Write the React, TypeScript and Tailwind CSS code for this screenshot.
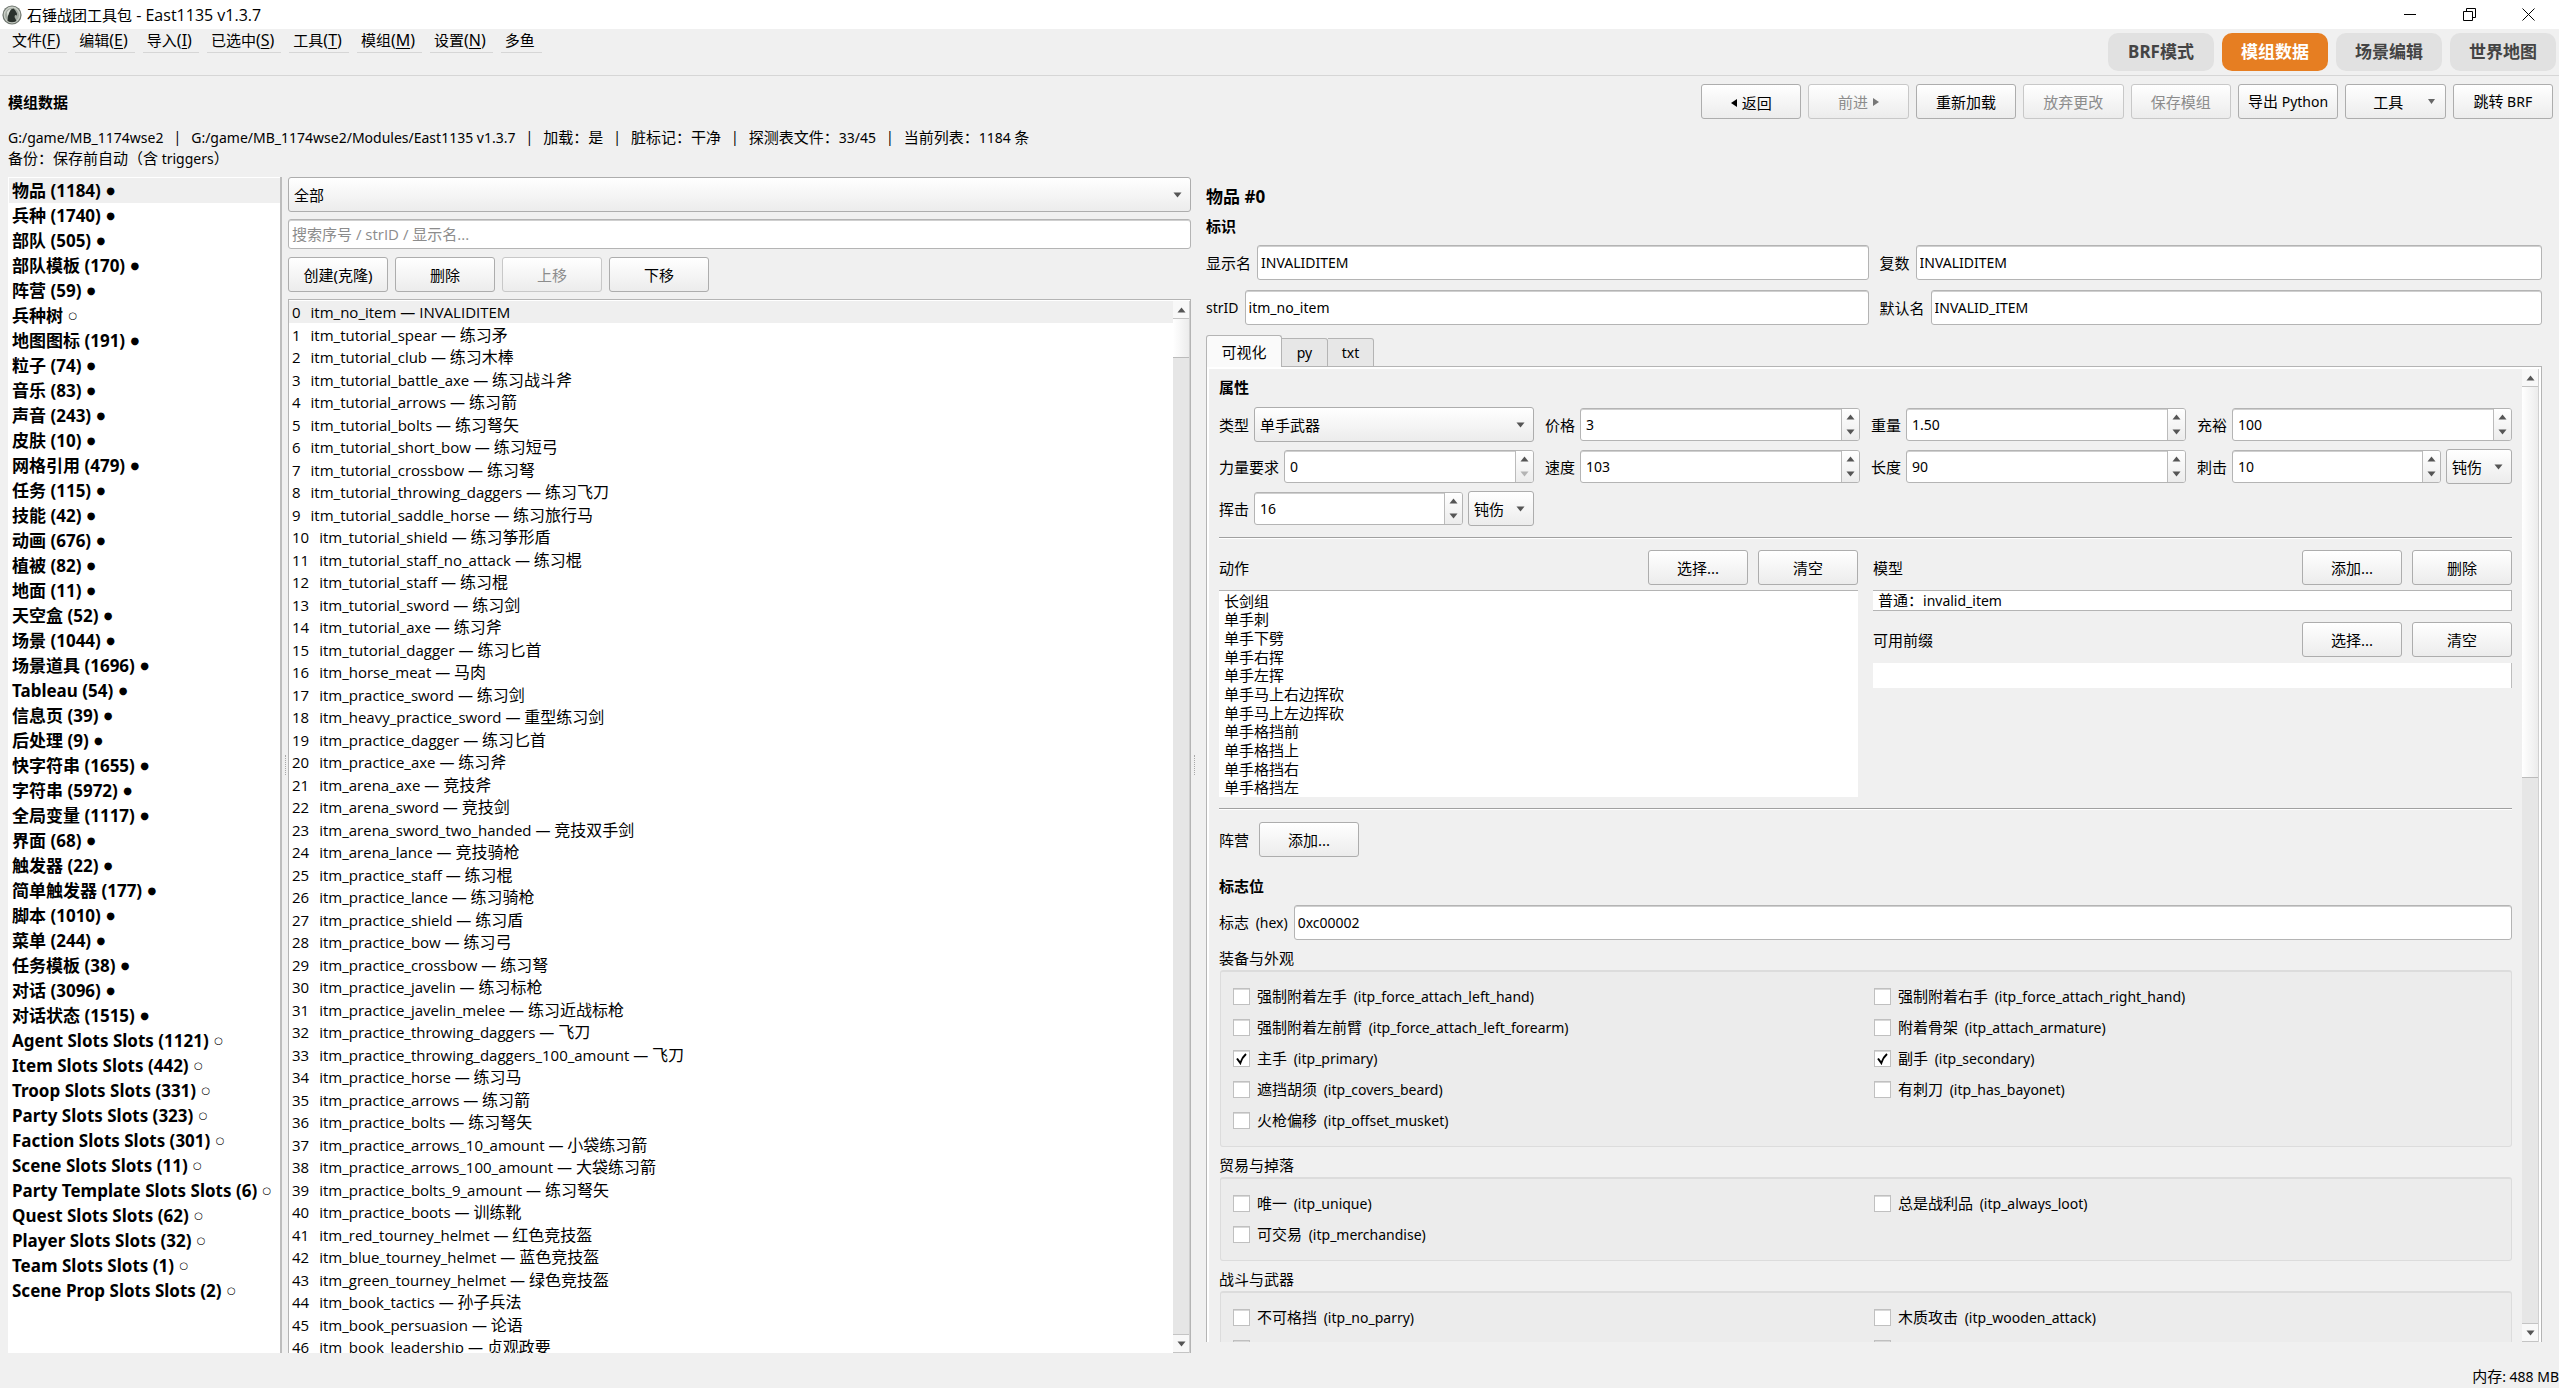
import { Fragment } from "react";

const MENUS = [
  ["文件", "F"],
  ["编辑", "E"],
  ["导入", "I"],
  ["已选中", "S"],
  ["工具", "T"],
  ["模组", "M"],
  ["设置", "N"],
  ["多鱼", ""],
];

const MODES = ["BRF模式", "模组数据", "场景编辑", "世界地图"];

const STATUS = [
  "G:/game/MB_1174wse2",
  "G:/game/MB_1174wse2/Modules/East1135 v1.3.7",
  "加载：是",
  "脏标记：干净",
  "探测表文件：33/45",
  "当前列表：1184 条",
];

// name, count, loaded
const CATEGORIES: [string, string, boolean][] = [
  ["物品", "1184", true],
  ["兵种", "1740", true],
  ["部队", "505", true],
  ["部队模板", "170", true],
  ["阵营", "59", true],
  ["兵种树", "", false],
  ["地图图标", "191", true],
  ["粒子", "74", true],
  ["音乐", "83", true],
  ["声音", "243", true],
  ["皮肤", "10", true],
  ["网格引用", "479", true],
  ["任务", "115", true],
  ["技能", "42", true],
  ["动画", "676", true],
  ["植被", "82", true],
  ["地面", "11", true],
  ["天空盒", "52", true],
  ["场景", "1044", true],
  ["场景道具", "1696", true],
  ["Tableau", "54", true],
  ["信息页", "39", true],
  ["后处理", "9", true],
  ["快字符串", "1655", true],
  ["字符串", "5972", true],
  ["全局变量", "1117", true],
  ["界面", "68", true],
  ["触发器", "22", true],
  ["简单触发器", "177", true],
  ["脚本", "1010", true],
  ["菜单", "244", true],
  ["任务模板", "38", true],
  ["对话", "3096", true],
  ["对话状态", "1515", true],
  ["Agent Slots Slots", "1121", false],
  ["Item Slots Slots", "442", false],
  ["Troop Slots Slots", "331", false],
  ["Party Slots Slots", "323", false],
  ["Faction Slots Slots", "301", false],
  ["Scene Slots Slots", "11", false],
  ["Party Template Slots Slots", "6", false],
  ["Quest Slots Slots", "62", false],
  ["Player Slots Slots", "32", false],
  ["Team Slots Slots", "1", false],
  ["Scene Prop Slots Slots", "2", false],
];

const ITEMS = [
  "itm_no_item — INVALIDITEM",
  "itm_tutorial_spear — 练习矛",
  "itm_tutorial_club — 练习木棒",
  "itm_tutorial_battle_axe — 练习战斗斧",
  "itm_tutorial_arrows — 练习箭",
  "itm_tutorial_bolts — 练习弩矢",
  "itm_tutorial_short_bow — 练习短弓",
  "itm_tutorial_crossbow — 练习弩",
  "itm_tutorial_throwing_daggers — 练习飞刀",
  "itm_tutorial_saddle_horse — 练习旅行马",
  "itm_tutorial_shield — 练习筝形盾",
  "itm_tutorial_staff_no_attack — 练习棍",
  "itm_tutorial_staff — 练习棍",
  "itm_tutorial_sword — 练习剑",
  "itm_tutorial_axe — 练习斧",
  "itm_tutorial_dagger — 练习匕首",
  "itm_horse_meat — 马肉",
  "itm_practice_sword — 练习剑",
  "itm_heavy_practice_sword — 重型练习剑",
  "itm_practice_dagger — 练习匕首",
  "itm_practice_axe — 练习斧",
  "itm_arena_axe — 竞技斧",
  "itm_arena_sword — 竞技剑",
  "itm_arena_sword_two_handed — 竞技双手剑",
  "itm_arena_lance — 竞技骑枪",
  "itm_practice_staff — 练习棍",
  "itm_practice_lance — 练习骑枪",
  "itm_practice_shield — 练习盾",
  "itm_practice_bow — 练习弓",
  "itm_practice_crossbow — 练习弩",
  "itm_practice_javelin — 练习标枪",
  "itm_practice_javelin_melee — 练习近战标枪",
  "itm_practice_throwing_daggers — 飞刀",
  "itm_practice_throwing_daggers_100_amount — 飞刀",
  "itm_practice_horse — 练习马",
  "itm_practice_arrows — 练习箭",
  "itm_practice_bolts — 练习弩矢",
  "itm_practice_arrows_10_amount — 小袋练习箭",
  "itm_practice_arrows_100_amount — 大袋练习箭",
  "itm_practice_bolts_9_amount — 练习弩矢",
  "itm_practice_boots — 训练靴",
  "itm_red_tourney_helmet — 红色竞技盔",
  "itm_blue_tourney_helmet — 蓝色竞技盔",
  "itm_green_tourney_helmet — 绿色竞技盔",
  "itm_book_tactics — 孙子兵法",
  "itm_book_persuasion — 论语",
  "itm_book_leadership — 贞观政要",
];

const ACTIONS = [
  "长剑组",
  "单手刺",
  "单手下劈",
  "单手右挥",
  "单手左挥",
  "单手马上右边挥砍",
  "单手马上左边挥砍",
  "单手格挡前",
  "单手格挡上",
  "单手格挡右",
  "单手格挡左",
];

// flag label, checked
const FLAG_GROUPS: { title: string; flags: [string, boolean][] }[] = [
  {
    title: "装备与外观",
    flags: [
      ["强制附着左手 (itp_force_attach_left_hand)", false],
      ["强制附着右手 (itp_force_attach_right_hand)", false],
      ["强制附着左前臂 (itp_force_attach_left_forearm)", false],
      ["附着骨架 (itp_attach_armature)", false],
      ["主手 (itp_primary)", true],
      ["副手 (itp_secondary)", true],
      ["遮挡胡须 (itp_covers_beard)", false],
      ["有刺刀 (itp_has_bayonet)", false],
      ["火枪偏移 (itp_offset_musket)", false],
    ],
  },
  {
    title: "贸易与掉落",
    flags: [
      ["唯一 (itp_unique)", false],
      ["总是战利品 (itp_always_loot)", false],
      ["可交易 (itp_merchandise)", false],
    ],
  },
  {
    title: "战斗与武器",
    flags: [
      ["不可格挡 (itp_no_parry)", false],
      ["木质攻击 (itp_wooden_attack)", false],
      ["", false],
      ["", false],
    ],
  },
];

const LATIN = {
  sm: "text-[14px]",
  md: "text-[15px]",
  lg: "text-[16px]",
  xl: "text-[17px]",
};

// Latin runs get their own size beside the Chinese text around them
function Mix({ text, size = "sm" }: { text: string; size?: keyof typeof LATIN }) {
  return (
    <span className="whitespace-pre">
      {text.split(/([\u2e80-\uffef]+)/).map((run, i) =>
        i % 2 ? (
          <Fragment key={i}>{run}</Fragment>
        ) : (
          run && (
            <span key={i} className={`${LATIN[size]} ${size === "sm" && run.startsWith(" (") ? "ml-[3px]" : ""}`}>
              {run}
            </span>
          )
        )
      )}
    </span>
  );
}

function Arrow({ dir, faded }: { dir: "up" | "down"; faded?: boolean }) {
  return (
    <svg width="9" height="6" viewBox="0 0 9 6" className={faded ? "fill-[#b4b4b4]" : "fill-[#555]"}>
      {dir === "up" ? <path d="M0.5 5.5 L4.5 0.5 L8.5 5.5Z" /> : <path d="M0.5 0.5 L4.5 5.5 L8.5 0.5Z" />}
    </svg>
  );
}

function Button({ children, className = "w-[100px]", disabled }: { children: React.ReactNode; className?: string; disabled?: boolean }) {
  return (
    <button
      disabled={disabled}
      className={`h-[35px] shrink-0 rounded-[3px] border border-[#adadad] bg-linear-to-b from-white to-[#ececec] text-center whitespace-nowrap disabled:border-[#c8c8c8] disabled:text-[#8c8c8c] ${className}`}
    >
      {children}
    </button>
  );
}

function Combo({ label, value, className = "flex-1" }: { label: string; value: string; className?: string }) {
  return (
    <div className={`relative flex h-[35px] ${className}`}>
      <select
        aria-label={label}
        className="w-full appearance-none rounded-[3px] border border-[#adadad] bg-linear-to-b from-white to-[#ececec] px-[5px]"
      >
        <option>{value}</option>
      </select>
      <div className="pointer-events-none absolute inset-y-0 right-[9px] flex items-center">
        <Arrow dir="down" />
      </div>
    </div>
  );
}

function Spin({ id, value, atMin }: { id: string; value: string; atMin?: boolean }) {
  return (
    <div className="flex h-[33px] min-w-0 flex-1 overflow-hidden rounded-[3px] border border-[#b4b4b4] bg-white inset-shadow-[0_1px_0_#cfcfcf]">
      <input id={id} defaultValue={value} className="min-w-0 flex-1 px-[5px] text-[14px] outline-none" />
      <div className="flex w-[18px] flex-col items-center border-l border-[#bbb] bg-linear-to-b from-white to-[#ececec]">
        <button aria-label="+" className="flex flex-1 items-center justify-center">
          <Arrow dir="up" />
        </button>
        <button aria-label="-" className="flex flex-1 items-center justify-center">
          <Arrow dir="down" faded={atMin} />
        </button>
      </div>
    </div>
  );
}

function SpinField({ id, label, value, atMin, damage }: { id: string; label: string; value: string; atMin?: boolean; damage?: string }) {
  return (
    <div className="flex h-[35px] items-center gap-[5px]">
      <label htmlFor={id}>{label}</label>
      <Spin id={id} value={value} atMin={atMin} />
      {damage && <Combo label={label} value={damage} className="w-[66px]" />}
    </div>
  );
}

function TextField({ id, label, value }: { id: string; label: string; value: string }) {
  return (
    <div className="flex min-w-0 flex-1 items-center gap-[6px]">
      <label htmlFor={id}>
        <Mix text={label} />
      </label>
      <input
        id={id}
        defaultValue={value}
        className="h-[35px] min-w-0 flex-1 rounded-[3px] border border-[#b4b4b4] bg-white px-[3px] text-[14px] inset-shadow-[0_1px_0_#cfcfcf] outline-none"
      />
    </div>
  );
}

// Thumb height is a class so that each list can show its own range
function ScrollBar({ thumb }: { thumb: string }) {
  return (
    <div className="flex w-[17px] shrink-0 flex-col border-r border-[#d0d0d0] bg-[#e6e6e6]">
      <div className="flex h-[18px] items-center justify-center border-b border-[#c4c4c4] bg-[#f8f8f8]">
        <Arrow dir="up" />
      </div>
      <div className={`border-b border-[#bbb] bg-linear-to-r from-white to-[#ececec] ${thumb}`} />
      <div className="flex-1" />
      <div className="flex h-[19px] items-center justify-center border-y border-[#c4c4c4] bg-[#f8f8f8]">
        <Arrow dir="down" />
      </div>
    </div>
  );
}

function Splitter({ className }: { className: string }) {
  return (
    <div className={`flex shrink-0 items-center pl-[3px] ${className}`}>
      <div className="h-5 border-l border-dotted border-[#a8a8a8]" />
    </div>
  );
}

function Rule() {
  return <div className="h-[2px] border-b border-white bg-[#a0a0a0]" />;
}

function Logo() {
  return (
    <svg width="20" height="20" viewBox="0 0 20 20">
      <circle cx="10" cy="10" r="9.6" fill="#6f766f" />
      <circle cx="10" cy="10" r="8.4" fill="#c9cec6" />
      <circle cx="10" cy="10" r="7" fill="#a3aaa2" />
      <path d="M9 4.5 L11.5 3.5 L13 5 L15 8.5 L14.8 10.5 L13 10 L12.5 12 L14.5 16 Q10 18.5 5.5 16 L6 11 L7.5 7Z" fill="#2b322d" />
      <path d="M5 7 Q6.5 4.5 9 3.8 L7 7.5 L5.5 12Z" fill="#dfe3dc" />
    </svg>
  );
}

function TitleBar() {
  return (
    <header className="flex h-[29px] shrink-0 items-center bg-white pr-6 pl-[2px] text-[15px]">
      <Logo />
      <h1 className="ml-[5px] flex-1 font-['Open_Sans','Noto_Sans_CJK_SC',sans-serif]">
        <Mix text="石锤战团工具包 - East1135 v1.3.7" size="lg" />
      </h1>
      <div className="flex items-center gap-[46px]">
        <button aria-label="最小化">
          <svg width="13" height="13" viewBox="0 0 13 13" stroke="#000" fill="none">
            <path d="M0 6.5 H12" />
          </svg>
        </button>
        <button aria-label="还原">
          <svg width="13" height="13" viewBox="0 0 13 13" stroke="#000" fill="none">
            <path d="M0.5 3.5 H9.5 V12.5 H0.5Z M3.5 3 V0.5 H12.5 V9.5 H10" />
          </svg>
        </button>
        <button aria-label="关闭">
          <svg width="13" height="13" viewBox="0 0 13 13" stroke="#000" fill="none">
            <path d="M0.5 0.5 L12.5 12.5 M12.5 0.5 L0.5 12.5" />
          </svg>
        </button>
      </div>
    </header>
  );
}

function MenuBar() {
  return (
    <div className="flex h-[47px] shrink-0 justify-between border-b border-[#d6d6d6] pr-[3px] pl-2">
      <nav className="flex gap-2">
        {MENUS.map(([name, key]) => (
          <button key={name} className="flex h-6 items-center border-b border-[#d6d6d6] pr-[7px] pb-px pl-1">
            {name}
            {key && (
              <span className="text-[16px]">
                (<u className="underline-offset-2">{key}</u>)
              </span>
            )}
          </button>
        ))}
      </nav>
      <div className="flex items-center gap-2">
        {MODES.map((mode) => (
          <button
            key={mode}
            className={`h-[38px] w-[106px] rounded-[10px] text-[17px] font-bold ${
              mode === "模组数据" ? "bg-[#e67e22] text-white" : "bg-[#e1e1e1] text-[#444]"
            }`}
          >
            <Mix text={mode} size="xl" />
          </button>
        ))}
      </div>
    </div>
  );
}

function Toolbar() {
  return (
    <div className="flex h-[51px] shrink-0 items-center justify-between pr-[6px] pl-2">
      <h2 className="font-bold">模组数据</h2>
      <div className="grid w-[852px] grid-cols-8 gap-[7px]">
        <Button className="w-full">
          <span className="inline-flex items-center gap-[5px]">
            <svg width="6" height="8" viewBox="0 0 6 8"><path d="M6 0 V8 L0 4Z" /></svg>
            返回
          </span>
        </Button>
        <Button className="w-full" disabled>
          <span className="inline-flex items-center gap-[5px]">
            前进
            <svg width="6" height="8" viewBox="0 0 6 8" fill="#777"><path d="M0 0 V8 L6 4Z" /></svg>
          </span>
        </Button>
        <Button className="w-full">重新加载</Button>
        <Button className="w-full" disabled>放弃更改</Button>
        <Button className="w-full" disabled>保存模组</Button>
        <Button className="w-full">
          <Mix text="导出 Python" />
        </Button>
        <Button className="w-full">
          <span className="flex items-center justify-between pr-[10px] pl-[27px]">
            工具
            <svg width="7" height="5" viewBox="0 0 7 5" fill="#666"><path d="M0 0 H7 L3.5 5Z" /></svg>
          </span>
        </Button>
        <Button className="w-full">
          <Mix text="跳转 BRF" />
        </Button>
      </div>
    </div>
  );
}

function StatusLines() {
  return (
    <div className="h-[50px] shrink-0 pl-2">
      <p className="flex gap-[10px]">
        {STATUS.map((part, i) => (
          <Fragment key={part}>
            {i > 0 && <span className="text-[14px]">|</span>}
            <Mix text={part} />
          </Fragment>
        ))}
      </p>
      <p>
        <Mix text="备份：保存前自动（含 triggers）" />
      </p>
    </div>
  );
}

function Sidebar() {
  return (
    <aside className="flex w-[274px] shrink-0 flex-col border-r-2 border-[#bdbdbd] bg-white pt-px pl-px">
      {CATEGORIES.map(([name, count, loaded], i) => (
        <a
          key={name}
          href="#"
          className={`flex h-[25px] shrink-0 items-center gap-px pl-[3px] text-[17px] font-bold whitespace-pre ${i === 0 ? "bg-[#efefef]" : ""}`}
        >
          <Mix text={count ? `${name} (${count}) ` : `${name} `} size="xl" />
          <span className="font-['DejaVu_Sans'] text-[10px] font-normal">{loaded ? "●" : "○"}</span>
        </a>
      ))}
    </aside>
  );
}

function ItemBrowser() {
  return (
    <section className="flex w-[903px] shrink-0 flex-col">
      <Combo label="分类" value="全部" className="w-full shrink-0" />
      <input
        aria-label="搜索"
        placeholder="搜索序号 / strID / 显示名..."
        className="mt-[7px] h-[30px] shrink-0 rounded-[3px] border border-[#b4b4b4] bg-white px-[3px] font-['Open_Sans','Noto_Sans_CJK_SC',sans-serif] text-[15px] inset-shadow-[0_1px_0_#cfcfcf] outline-none placeholder:text-[#8c8c8c]"
      />
      <div className="mt-2 flex gap-[7px]">
        <Button>创建(克隆)</Button>
        <Button>删除</Button>
        <Button disabled>上移</Button>
        <Button>下移</Button>
      </div>
      <div className="mt-[7px] flex min-h-0 flex-1 border-x border-t border-[#b4b4b4] bg-white pt-px">
        <ul className="flex-1 overflow-hidden font-['Open_Sans','Noto_Sans_CJK_SC',sans-serif] text-[16px]">
          {ITEMS.map((item, i) => (
            <li
              key={i}
              className={`flex items-center gap-[10px] pl-[3px] odd:h-[22px] even:h-[23px] ${i === 0 ? "bg-[#efefef]" : ""}`}
            >
              <span className="text-[15px]">{i}</span>
              <Mix text={item} size="md" />
            </li>
          ))}
        </ul>
        <ScrollBar thumb="h-[39px]" />
      </div>
    </section>
  );
}

function ListHeader({ title, first, second }: { title: string; first: string; second: string }) {
  return (
    <div className="flex items-center gap-[10px]">
      <span className="flex-1">{title}</span>
      <Button>{first}</Button>
      <Button>{second}</Button>
    </div>
  );
}

function FlagGroup({ title, flags }: { title: string; flags: [string, boolean][] }) {
  return (
    <fieldset className="mt-[6px]">
      <legend className="h-6 leading-6">{title}</legend>
      <div className="ml-px grid grid-cols-2 rounded-[3px] border border-t-2 border-[#dcdcdc] bg-[#ececec] pt-[9px] pb-[10px] pl-3">
        {flags.map(([label, checked], i) => (
          <label key={i} className={`relative flex h-[31px] items-center gap-[7px] ${i % 2 ? "ml-[2px]" : ""}`}>
            <input
              type="checkbox"
              defaultChecked={checked}
              className="peer size-[17px] appearance-none border border-[#c0c0c0] bg-white inset-shadow-[0_1px_0_#d8d8d8]"
            />
            <svg
              width="11"
              height="12"
              viewBox="0 0 11 12"
              fill="none"
              stroke="#000"
              strokeWidth="2"
              className="pointer-events-none absolute left-[3px] hidden peer-checked:block"
            >
              <path d="M1 5.5 L4.3 10 Q6 4.5 10 1" />
            </svg>
            <Mix text={label} />
          </label>
        ))}
      </div>
    </fieldset>
  );
}

function VisualEditor() {
  return (
    <div className="flex min-w-0 flex-1 flex-col px-[10px] pt-2">
      <h3 className="h-[21px] shrink-0 leading-[21px] font-bold">属性</h3>
      <div className="mt-[9px] grid shrink-0 grid-cols-4 gap-x-[11px] gap-y-[7px]">
        <div className="flex items-center gap-[5px]">
          <span>类型</span>
          <Combo label="类型" value="单手武器" />
        </div>
        <SpinField id="price" label="价格" value="3" />
        <SpinField id="weight" label="重量" value="1.50" />
        <SpinField id="abundance" label="充裕" value="100" />
        <SpinField id="difficulty" label="力量要求" value="0" atMin />
        <SpinField id="speed" label="速度" value="103" />
        <SpinField id="length" label="长度" value="90" />
        <SpinField id="thrust" label="刺击" value="10" damage="钝伤" />
        <SpinField id="swing" label="挥击" value="16" damage="钝伤" />
      </div>
      <div className="mt-[11px] shrink-0">
        <Rule />
      </div>
      <div className="mt-[11px] grid shrink-0 grid-cols-2 gap-[15px]">
        <div>
          <ListHeader title="动作" first="选择..." second="清空" />
          <ul className="mt-[5px] border-t border-[#b4b4b4] bg-white pt-px pl-[5px]">
            {ACTIONS.map((action) => (
              <li key={action} className="h-[19px] leading-[19px] nth-[3n+1]:h-[18px]">
                {action}
              </li>
            ))}
          </ul>
        </div>
        <div>
          <ListHeader title="模型" first="添加..." second="删除" />
          <div className="mt-[5px] h-[21px] border-y border-r border-[#b4b4b4] bg-white pl-[5px] leading-[19px]">
            <Mix text="普通：invalid_item" />
          </div>
          <div className="mt-[11px]">
            <ListHeader title="可用前缀" first="选择..." second="清空" />
          </div>
          <div className="mt-[6px] h-[25px] border-r border-[#bdbdbd] bg-white" />
        </div>
      </div>
      <div className="mt-[11px] shrink-0">
        <Rule />
      </div>
      <div className="mt-[12px] flex shrink-0 items-center gap-[10px]">
        <span>阵营</span>
        <Button>添加...</Button>
      </div>
      <h3 className="mt-[19px] h-[21px] shrink-0 leading-[21px] font-bold">标志位</h3>
      <div className="mt-[8px] flex shrink-0">
        <TextField id="flags" label="标志 (hex)" value="0xc00002" />
      </div>
      {FLAG_GROUPS.map((group) => (
        <FlagGroup key={group.title} {...group} />
      ))}
    </div>
  );
}

function Detail() {
  return (
    <section className="flex min-w-0 flex-1 flex-col pr-[17px] pb-[11px]">
      <h2 className="mt-2 h-6 shrink-0 text-[17px] leading-6 font-bold">
        <Mix text="物品 #0" size="xl" />
      </h2>
      <h3 className="mt-[7px] h-[21px] shrink-0 leading-[21px] font-bold">标识</h3>
      <div className="mt-[8px] grid grid-cols-2 gap-x-[11px] gap-y-[10px]">
        <TextField id="name" label="显示名" value="INVALIDITEM" />
        <TextField id="plural" label="复数" value="INVALIDITEM" />
        <TextField id="strid" label="strID" value="itm_no_item" />
        <TextField id="default-name" label="默认名" value="INVALID_ITEM" />
      </div>
      <div role="tablist" className="relative z-10 mt-[10px] -mb-px flex h-[32px] shrink-0 items-end">
        <button role="tab" className="h-full w-[76px] rounded-t-[3px] border border-b-0 border-[#b4b4b4] bg-[#fafafa]">
          可视化
        </button>
        <button role="tab" className="h-[29px] w-[46px] rounded-tr-[3px] border border-l-0 border-[#b4b4b4] bg-[#e7e7e7] text-[14px]">
          py
        </button>
        <button role="tab" className="h-[29px] w-[46px] rounded-tr-[3px] border border-l-0 border-[#b4b4b4] bg-[#e7e7e7] text-[14px]">
          txt
        </button>
      </div>
      <div className="flex min-h-0 flex-1 border border-b-0 border-[#b4b4b4] bg-white px-[2px] pt-[2px]">
        <div className="flex min-w-0 flex-1 overflow-hidden bg-[#f0f0f0]">
          <VisualEditor />
        </div>
        <ScrollBar thumb="h-[391px]" />
      </div>
    </section>
  );
}

export default function App() {
  return (
    <div className="flex h-screen flex-col overflow-hidden bg-[#f0f0f0] font-['Noto_Sans','Noto_Sans_CJK_SC',sans-serif] text-[15px] leading-5 text-black">
      <TitleBar />
      <MenuBar />
      <Toolbar />
      <StatusLines />
      <main className="flex min-h-0 flex-1 pl-2">
        <Sidebar />
        <Splitter className="w-[6px]" />
        <ItemBrowser />
        <Splitter className="w-[15px]" />
        <Detail />
      </main>
      <footer className="h-[35px] shrink-0 pt-[13px] text-right">
        <Mix text="内存: 488 MB" />
      </footer>
    </div>
  );
}
